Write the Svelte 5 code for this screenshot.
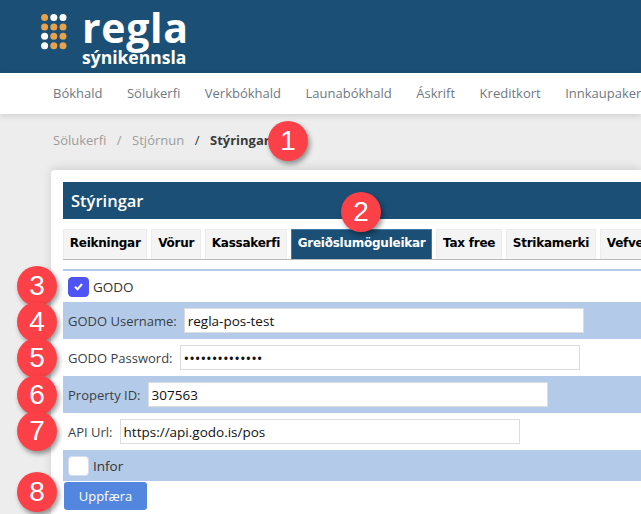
<script>
	const navItems = ['Bókhald', 'Sölukerfi', 'Verkbókhald', 'Launabókhald', 'Áskrift', 'Kreditkort', 'Innkaupakerfi'];
	const tabs = ['Reikningar', 'Vörur', 'Kassakerfi', 'Greiðslumöguleikar', 'Tax free', 'Strikamerki', 'Vefverslun'];
	const activeTab = 'Greiðslumöguleikar';

	// logo dot grid, o = orange, w = white
	const dots = ['oww', 'ooo', 'woo', 'woo'];

	const badges = [
		{ n: 1, x: 288, y: 141 },
		{ n: 2, x: 361, y: 212 },
		{ n: 3, x: 37, y: 286 },
		{ n: 4, x: 37, y: 322 },
		{ n: 5, x: 37, y: 358 },
		{ n: 6, x: 37, y: 395 },
		{ n: 7, x: 37, y: 431 },
		{ n: 8, x: 37, y: 492 }
	];
</script>

<div class="page">
	<header class="top">
		<svg class="dots" width="26" height="36" viewBox="0 0 26 36">
			{#each dots as row, r}
				{#each row as d, c}
					<circle cx={3.6 + c * 9.2} cy={3.6 + r * 9.35} r="3.5" fill={d === 'o' ? '#e8a24c' : '#fff'} />
				{/each}
			{/each}
		</svg>
		<div class="brand">
			<div class="brand-name">regla</div>
			<div class="brand-sub">sýnikennsla</div>
		</div>
	</header>

	<nav class="nav">
		{#each navItems as item}
			<span>{item}</span>
		{/each}
	</nav>

	<div class="crumbs">
		<span>Sölukerfi</span>
		<span class="sep">/</span>
		<span>Stjórnun</span>
		<span class="sep dark">/</span>
		<strong>Stýringar</strong>
	</div>

	<section class="card">
		<h2>Stýringar</h2>

		<div class="tabs">
			{#each tabs as tab}
				<span class="tab" class:active={tab === activeTab}>{tab}</span>
			{/each}
		</div>

		<div class="form">
			<div class="row check">
				<span class="box checked">
					<svg width="13" height="13" viewBox="0 0 13 13"><path d="M3 6.8 5.5 9.2 10 4" fill="none" stroke="#fff" stroke-width="2" /></svg>
				</span>
				<span>GODO</span>
			</div>
			<div class="row shaded field">
				<label for="user">GODO Username:</label>
				<input id="user" class="user" value="regla-pos-test" />
			</div>
			<div class="row field">
				<label for="pass">GODO Password:</label>
				<input id="pass" type="password" value="regla-pos-test" />
			</div>
			<div class="row shaded field">
				<label for="prop">Property ID:</label>
				<input id="prop" value="307563" />
			</div>
			<div class="row field">
				<label for="api">API Url:</label>
				<input id="api" value="https://api.godo.is/pos" />
			</div>
			<div class="row shaded check">
				<span class="box"></span>
				<span>Infor</span>
			</div>
		</div>

		<button class="save">Uppfæra</button>
	</section>

	{#each badges as b}
		<span class="badge" style="left: {b.x - 20}px; top: {b.y - 20}px">{b.n}</span>
	{/each}
</div>

<style>
	:global(body) {
		margin: 0;
		overflow: hidden;
	}

	.page {
		position: relative;
		width: 641px;
		height: 514px;
		overflow: hidden;
		background: #ededed;
		font-family: 'Open Sans', sans-serif;
		font-size: 13px;
		color: #333;
	}

	.top {
		display: flex;
		align-items: flex-start;
		height: 73px;
		padding-left: 41px;
		box-sizing: border-box;
		background: #1b4f75;
	}

	.dots {
		margin-top: 14px;
	}

	.brand {
		margin-left: 15px;
		color: #fff;
	}

	.brand-name {
		margin-top: 6px;
		font-size: 41px;
		line-height: 42px;
		font-weight: 700;
		letter-spacing: 0.7px;
	}

	.brand-sub {
		font-size: 17.5px;
		line-height: 18px;
		font-weight: 700;
	}

	.nav {
		position: relative;
		display: flex;
		gap: 24.5px;
		height: 41px;
		box-sizing: border-box;
		padding: 0 0 1px 53px;
		align-items: center;
		background: #fff;
		color: #6f7884;
		white-space: nowrap;
		box-shadow: 0 2px 6px rgba(0, 0, 0, 0.12);
	}

	.crumbs {
		display: flex;
		align-items: center;
		gap: 8px;
		height: 56px;
		padding: 0 0 5px 53px;
		box-sizing: border-box;
		color: #9c9c9c;
		white-space: nowrap;
	}

	.sep {
		margin: 0 2.5px;
	}

	.dark {
		color: #333;
		margin-right: 2.5px;
	}

	.crumbs strong {
		color: #3a3a3a;
		font-weight: 700;
		font-size: 13px;
	}

	.card {
		margin-left: 51px;
		padding: 12px 0 0 12px;
		height: 344px;
		box-sizing: border-box;
		background: #fff;
		border-radius: 4px 0 0 0;
		box-shadow: 0 -2px 10px rgba(0, 0, 0, 0.12);
	}

	h2 {
		margin: 0;
		height: 37px;
		line-height: 37px;
		padding-left: 8px;
		background: #1b4f75;
		color: #fff;
		font-size: 16.5px;
		font-weight: 600;
	}

	.tabs {
		display: flex;
		gap: 4px;
		margin-top: 10px;
		height: 31px;
		box-sizing: border-box;
		border-bottom: 1px solid #bbb;
		white-space: nowrap;
	}

	.tab {
		height: 30px;
		line-height: 27px;
		padding: 0 5.8px;
		box-sizing: border-box;
		background: #f4f4f4;
		border: 1px solid #ececec;
		border-bottom: 0;
		color: #000;
		font-family: 'DejaVu Sans', sans-serif;
		font-weight: 700;
		font-size: 12px;
		letter-spacing: -0.25px;
		flex: none;
	}

	.tab.active {
		background: #1b4f75;
		border-color: #3f7aa5;
		color: #fff;
	}

	.form {
		margin-top: 9px;
		border-top: 2px solid #b3cbe8;
	}

	.row {
		display: flex;
		align-items: center;
		padding-left: 5px;
		white-space: nowrap;
	}

	.check {
		height: 31px;
		gap: 4px;
		font-size: 13.5px;
	}

	.field {
		height: 37px;
		gap: 7px;
	}

	.shaded {
		background: #b3cbe8;
	}

	.box {
		display: flex;
		align-items: center;
		justify-content: center;
		width: 21px;
		height: 20px;
		box-sizing: border-box;
		border-radius: 4px;
		background: #fff;
		border: 1px solid #dcdcf0;
	}

	.box.checked {
		background: #4f55f5;
		border-color: #4f55f5;
	}

	label {
		color: #3a3f47;
	}

	input {
		width: 400px;
		height: 25px;
		box-sizing: border-box;
		padding: 0 3px;
		border: 1px solid #dcdcdc;
		background: #fff;
		color: #111;
		font-family: 'Open Sans', sans-serif;
		font-size: 13.5px;
		outline: none;
	}

	input[type='password'] {
		font-size: 15px;
	}

	.save {
		display: block;
		margin: 1px 0 0 1px;
		width: 83px;
		height: 28px;
		padding: 0;
		border: 0;
		border-radius: 3px;
		background: #5286df;
		color: #fff;
		font-family: 'Open Sans', sans-serif;
		font-size: 13px;
	}

	.badge {
		position: absolute;
		width: 40px;
		height: 40px;
		border-radius: 50%;
		background: #fb4147;
		color: #fff;
		font-family: 'Liberation Sans', sans-serif;
		font-size: 28px;
		line-height: 40px;
		text-align: center;
		box-shadow: 2px 3px 5px rgba(0, 0, 0, 0.4);
	}
</style>
